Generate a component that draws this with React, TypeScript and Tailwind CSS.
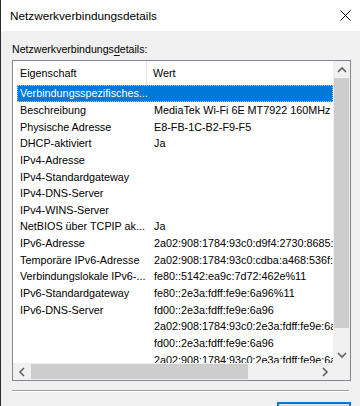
const rows = [
    { name: 'Verbindungsspezifisches...', value: '', selected: true },
    { name: 'Beschreibung', value: 'MediaTek Wi-Fi 6E MT7922 160MHz Wireless LAN Card' },
    { name: 'Physische Adresse', value: 'E8-FB-1C-B2-F9-F5' },
    { name: 'DHCP-aktiviert', value: 'Ja' },
    { name: 'IPv4-Adresse', value: '' },
    { name: 'IPv4-Standardgateway', value: '' },
    { name: 'IPv4-DNS-Server', value: '' },
    { name: 'IPv4-WINS-Server', value: '' },
    { name: 'NetBIOS über TCPIP ak...', value: 'Ja' },
    { name: 'IPv6-Adresse', value: '2a02:908:1784:93c0:d9f4:2730:8685:1b2c' },
    { name: 'Temporäre IPv6-Adresse', value: '2a02:908:1784:93c0:cdba:a468:536f:9e01' },
    { name: 'Verbindungslokale IPv6-...', value: 'fe80::5142:ea9c:7d72:462e%11' },
    { name: 'IPv6-Standardgateway', value: 'fe80::2e3a:fdff:fe9e:6a96%11' },
    { name: 'IPv6-DNS-Server', value: 'fd00::2e3a:fdff:fe9e:6a96' },
    { name: '', value: '2a02:908:1784:93c0:2e3a:fdff:fe9e:6a96' },
    { name: '', value: 'fd00::2e3a:fdff:fe9e:6a96' },
    { name: '', value: '2a02:908:1784:93c0:2e3a:fdff:fe9e:6a96' },
]

const Chevron = ({ dir }: { dir: 'up' | 'down' | 'left' | 'right' }) => {
    const d = {
        up: 'M1 6 L5 2 L9 6',
        down: 'M1 2 L5 6 L9 2',
        left: 'M6 1 L2 5 L6 9',
        right: 'M2 1 L6 5 L2 9',
    }[dir]
    const vertical = dir === 'up' || dir === 'down'
    return (
        <svg
            width={vertical ? 10 : 8}
            height={vertical ? 8 : 10}
            viewBox={vertical ? '0 0 10 8' : '0 0 8 10'}
            fill="none"
            stroke="#606060"
            strokeWidth="1.6"
        >
            <path d={d} />
        </svg>
    )
}

export default function App() {
    return (
        <div
            className="w-[360px] h-[406px] overflow-hidden bg-[#f0f0f0] border-l border-[#2b2b2b] text-black"
            style={{ fontFamily: '"Liberation Sans", Arial, sans-serif' }}
        >
            {/* title bar */}
            <div className="h-[31px] bg-white flex items-center justify-between pl-[9px] pr-[9px]">
                <span className="text-[11.75px]">Netzwerkverbindungsdetails</span>
                <svg width="11" height="11" viewBox="0 0 11 11" stroke="#000" strokeWidth="1">
                    <path d="M0.5 0.5 L10.5 10.5 M10.5 0.5 L0.5 10.5" />
                </svg>
            </div>

            <div className="pl-[11px] pr-[9px] text-[10.6px]">
                <div className="mt-[11px] h-[14px] leading-[14px]">
                    Netzwerkverbindungs<u className="underline-offset-2">d</u>etails:
                </div>

                {/* list box */}
                <div className="mt-[4px] w-[339px] h-[321px] border border-[#828790] bg-white flex flex-col text-[10.8px]">
                    <div className="flex h-[302px]">
                        <div className="w-[320px] h-[302px] overflow-hidden whitespace-nowrap">
                            <div className="h-[24px] flex items-center">
                                <div className="w-[134px] shrink-0 pl-[7px] h-full flex items-center border-r border-[#e5e5e5]">
                                    Eigenschaft
                                </div>
                                <div className="pl-[6px]">Wert</div>
                            </div>
                            <div className="pl-[4px]">
                                {rows.map((row, i) => (
                                    <div
                                        key={i}
                                        className={
                                            row.selected
                                                ? 'h-[16.67px] flex items-center bg-[#0078d7] text-white border border-dotted border-[#f6b07a]'
                                                : 'h-[16.67px] flex items-center'
                                        }
                                    >
                                        <div className={row.selected ? 'w-[130px] shrink-0 pl-[2px] overflow-hidden' : 'w-[130px] shrink-0 pl-[3px] overflow-hidden'}>
                                            {row.name}
                                        </div>
                                        <div className="pl-[7px] shrink-0">{row.value}</div>
                                    </div>
                                ))}
                            </div>
                        </div>

                        {/* vertical scrollbar */}
                        <div className="w-[17px] h-[302px] bg-[#f0f0f0] flex flex-col">
                            <div className="h-[17px] flex items-center justify-center">
                                <Chevron dir="up" />
                            </div>
                            <div className="mx-[1px] h-[250px] bg-[#cdcdcd]" />
                            <div className="flex-1" />
                            <div className="h-[17px] flex items-center justify-center">
                                <Chevron dir="down" />
                            </div>
                        </div>
                    </div>

                    {/* horizontal scrollbar */}
                    <div className="flex h-[17px]">
                        <div className="w-[320px] h-[17px] bg-[#f0f0f0] flex items-center">
                            <div className="w-[17px] h-[17px] flex items-center justify-center">
                                <Chevron dir="left" />
                            </div>
                            <div className="ml-[1px] w-[217px] h-[15px] bg-[#cdcdcd]" />
                            <div className="flex-1" />
                            <div className="w-[17px] h-[17px] flex items-center justify-center">
                                <Chevron dir="right" />
                            </div>
                        </div>
                        <div className="w-[17px] h-[17px] bg-[#f0f0f0]" />
                    </div>
                </div>

                {/* separator */}
                <div className="mt-[9px] w-[337px] border-t border-[#a0a0a0] border-b border-b-white" />

                <div className="mt-[10px] flex justify-end">
                    <div className="w-[74px] h-[23px] border-2 border-[#0078d7] bg-[#e1e1e1]" />
                </div>
            </div>
        </div>
    )
}
